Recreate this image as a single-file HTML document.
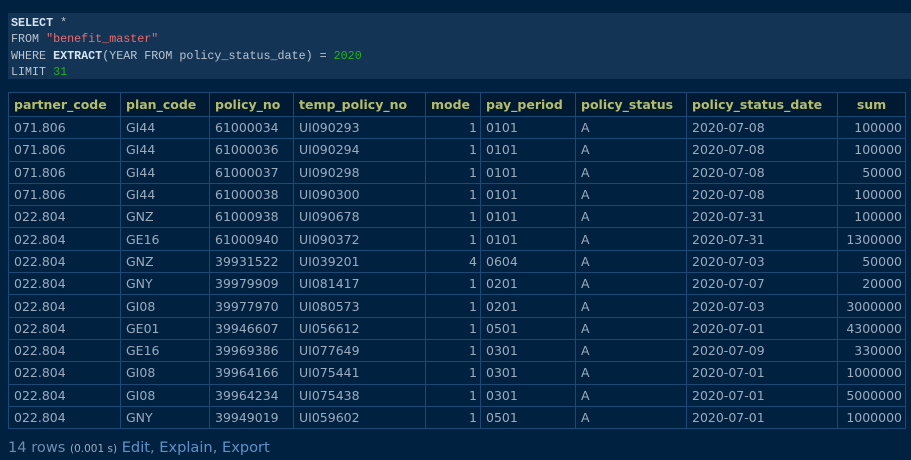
<!DOCTYPE html>
<html><head><meta charset="utf-8"><style>
html,body{margin:0;padding:0;background:#012141;width:911px;height:460px;overflow:hidden}
.code{position:absolute;left:8px;top:13px;width:903px;height:66px;background:#133455;font-family:"Liberation Mono",monospace;font-size:11.7px;line-height:16.3px;color:#b8c4d0;padding:2px 0 0 3px;box-sizing:border-box;white-space:pre}
.k{color:#d6e4f2;font-weight:bold}.s{color:#ee6b6b}.n{color:#22b022}
table{position:absolute;left:8px;top:92px;border-collapse:collapse;table-layout:fixed;font-family:"DejaVu Sans",Verdana,sans-serif;font-size:12.5px}
td,th{border:1px solid #1d4a74;padding:0 0 0 5px;height:21.3px;white-space:nowrap;overflow:hidden;color:#9cabbd;font-weight:normal;text-align:left}
th{color:#b5bd68;font-weight:bold;background:#001a33;height:23px}
td.r{text-align:right;padding:0 3px 0 0}
th.c{text-align:center;padding:0}
.f{position:absolute;left:8px;top:439px;font-family:"DejaVu Sans",Verdana,sans-serif;font-size:14.6px;color:#6f8db0}
.f small{font-size:10.5px;color:#9cabbd}.f a{color:#5d94c8}
</style></head><body>
<div class="code"><span class="k">SELECT</span> *
FROM <span class="s">"benefit_master"</span>
WHERE <span class="k">EXTRACT</span>(YEAR FROM policy_status_date) = <span class="n">2020</span>
LIMIT <span class="n">31</span></div>
<table>
<colgroup><col style="width:112px"><col style="width:89px"><col style="width:84px"><col style="width:132px"><col style="width:55px"><col style="width:95px"><col style="width:111px"><col style="width:151px"><col style="width:68px"></colgroup>
<tr><th>partner_code</th><th>plan_code</th><th>policy_no</th><th>temp_policy_no</th><th>mode</th><th>pay_period</th><th>policy_status</th><th>policy_status_date</th><th class="c">sum</th></tr>
<tr><td>071.806</td><td>GI44</td><td>61000034</td><td>UI090293</td><td class="r">1</td><td>0101</td><td>A</td><td>2020-07-08</td><td class="r">100000</td></tr>
<tr><td>071.806</td><td>GI44</td><td>61000036</td><td>UI090294</td><td class="r">1</td><td>0101</td><td>A</td><td>2020-07-08</td><td class="r">100000</td></tr>
<tr><td>071.806</td><td>GI44</td><td>61000037</td><td>UI090298</td><td class="r">1</td><td>0101</td><td>A</td><td>2020-07-08</td><td class="r">50000</td></tr>
<tr><td>071.806</td><td>GI44</td><td>61000038</td><td>UI090300</td><td class="r">1</td><td>0101</td><td>A</td><td>2020-07-08</td><td class="r">100000</td></tr>
<tr><td>022.804</td><td>GNZ</td><td>61000938</td><td>UI090678</td><td class="r">1</td><td>0101</td><td>A</td><td>2020-07-31</td><td class="r">100000</td></tr>
<tr><td>022.804</td><td>GE16</td><td>61000940</td><td>UI090372</td><td class="r">1</td><td>0101</td><td>A</td><td>2020-07-31</td><td class="r">1300000</td></tr>
<tr><td>022.804</td><td>GNZ</td><td>39931522</td><td>UI039201</td><td class="r">4</td><td>0604</td><td>A</td><td>2020-07-03</td><td class="r">50000</td></tr>
<tr><td>022.804</td><td>GNY</td><td>39979909</td><td>UI081417</td><td class="r">1</td><td>0201</td><td>A</td><td>2020-07-07</td><td class="r">20000</td></tr>
<tr><td>022.804</td><td>GI08</td><td>39977970</td><td>UI080573</td><td class="r">1</td><td>0201</td><td>A</td><td>2020-07-03</td><td class="r">3000000</td></tr>
<tr><td>022.804</td><td>GE01</td><td>39946607</td><td>UI056612</td><td class="r">1</td><td>0501</td><td>A</td><td>2020-07-01</td><td class="r">4300000</td></tr>
<tr><td>022.804</td><td>GE16</td><td>39969386</td><td>UI077649</td><td class="r">1</td><td>0301</td><td>A</td><td>2020-07-09</td><td class="r">330000</td></tr>
<tr><td>022.804</td><td>GI08</td><td>39964166</td><td>UI075441</td><td class="r">1</td><td>0301</td><td>A</td><td>2020-07-01</td><td class="r">1000000</td></tr>
<tr><td>022.804</td><td>GI08</td><td>39964234</td><td>UI075438</td><td class="r">1</td><td>0301</td><td>A</td><td>2020-07-01</td><td class="r">5000000</td></tr>
<tr><td>022.804</td><td>GNY</td><td>39949019</td><td>UI059602</td><td class="r">1</td><td>0501</td><td>A</td><td>2020-07-01</td><td class="r">1000000</td></tr>
</table>
<div class="f">14 rows <small>(0.001 s)</small> <a>Edit</a>, <a>Explain</a>, <a>Export</a></div>
</body></html>
